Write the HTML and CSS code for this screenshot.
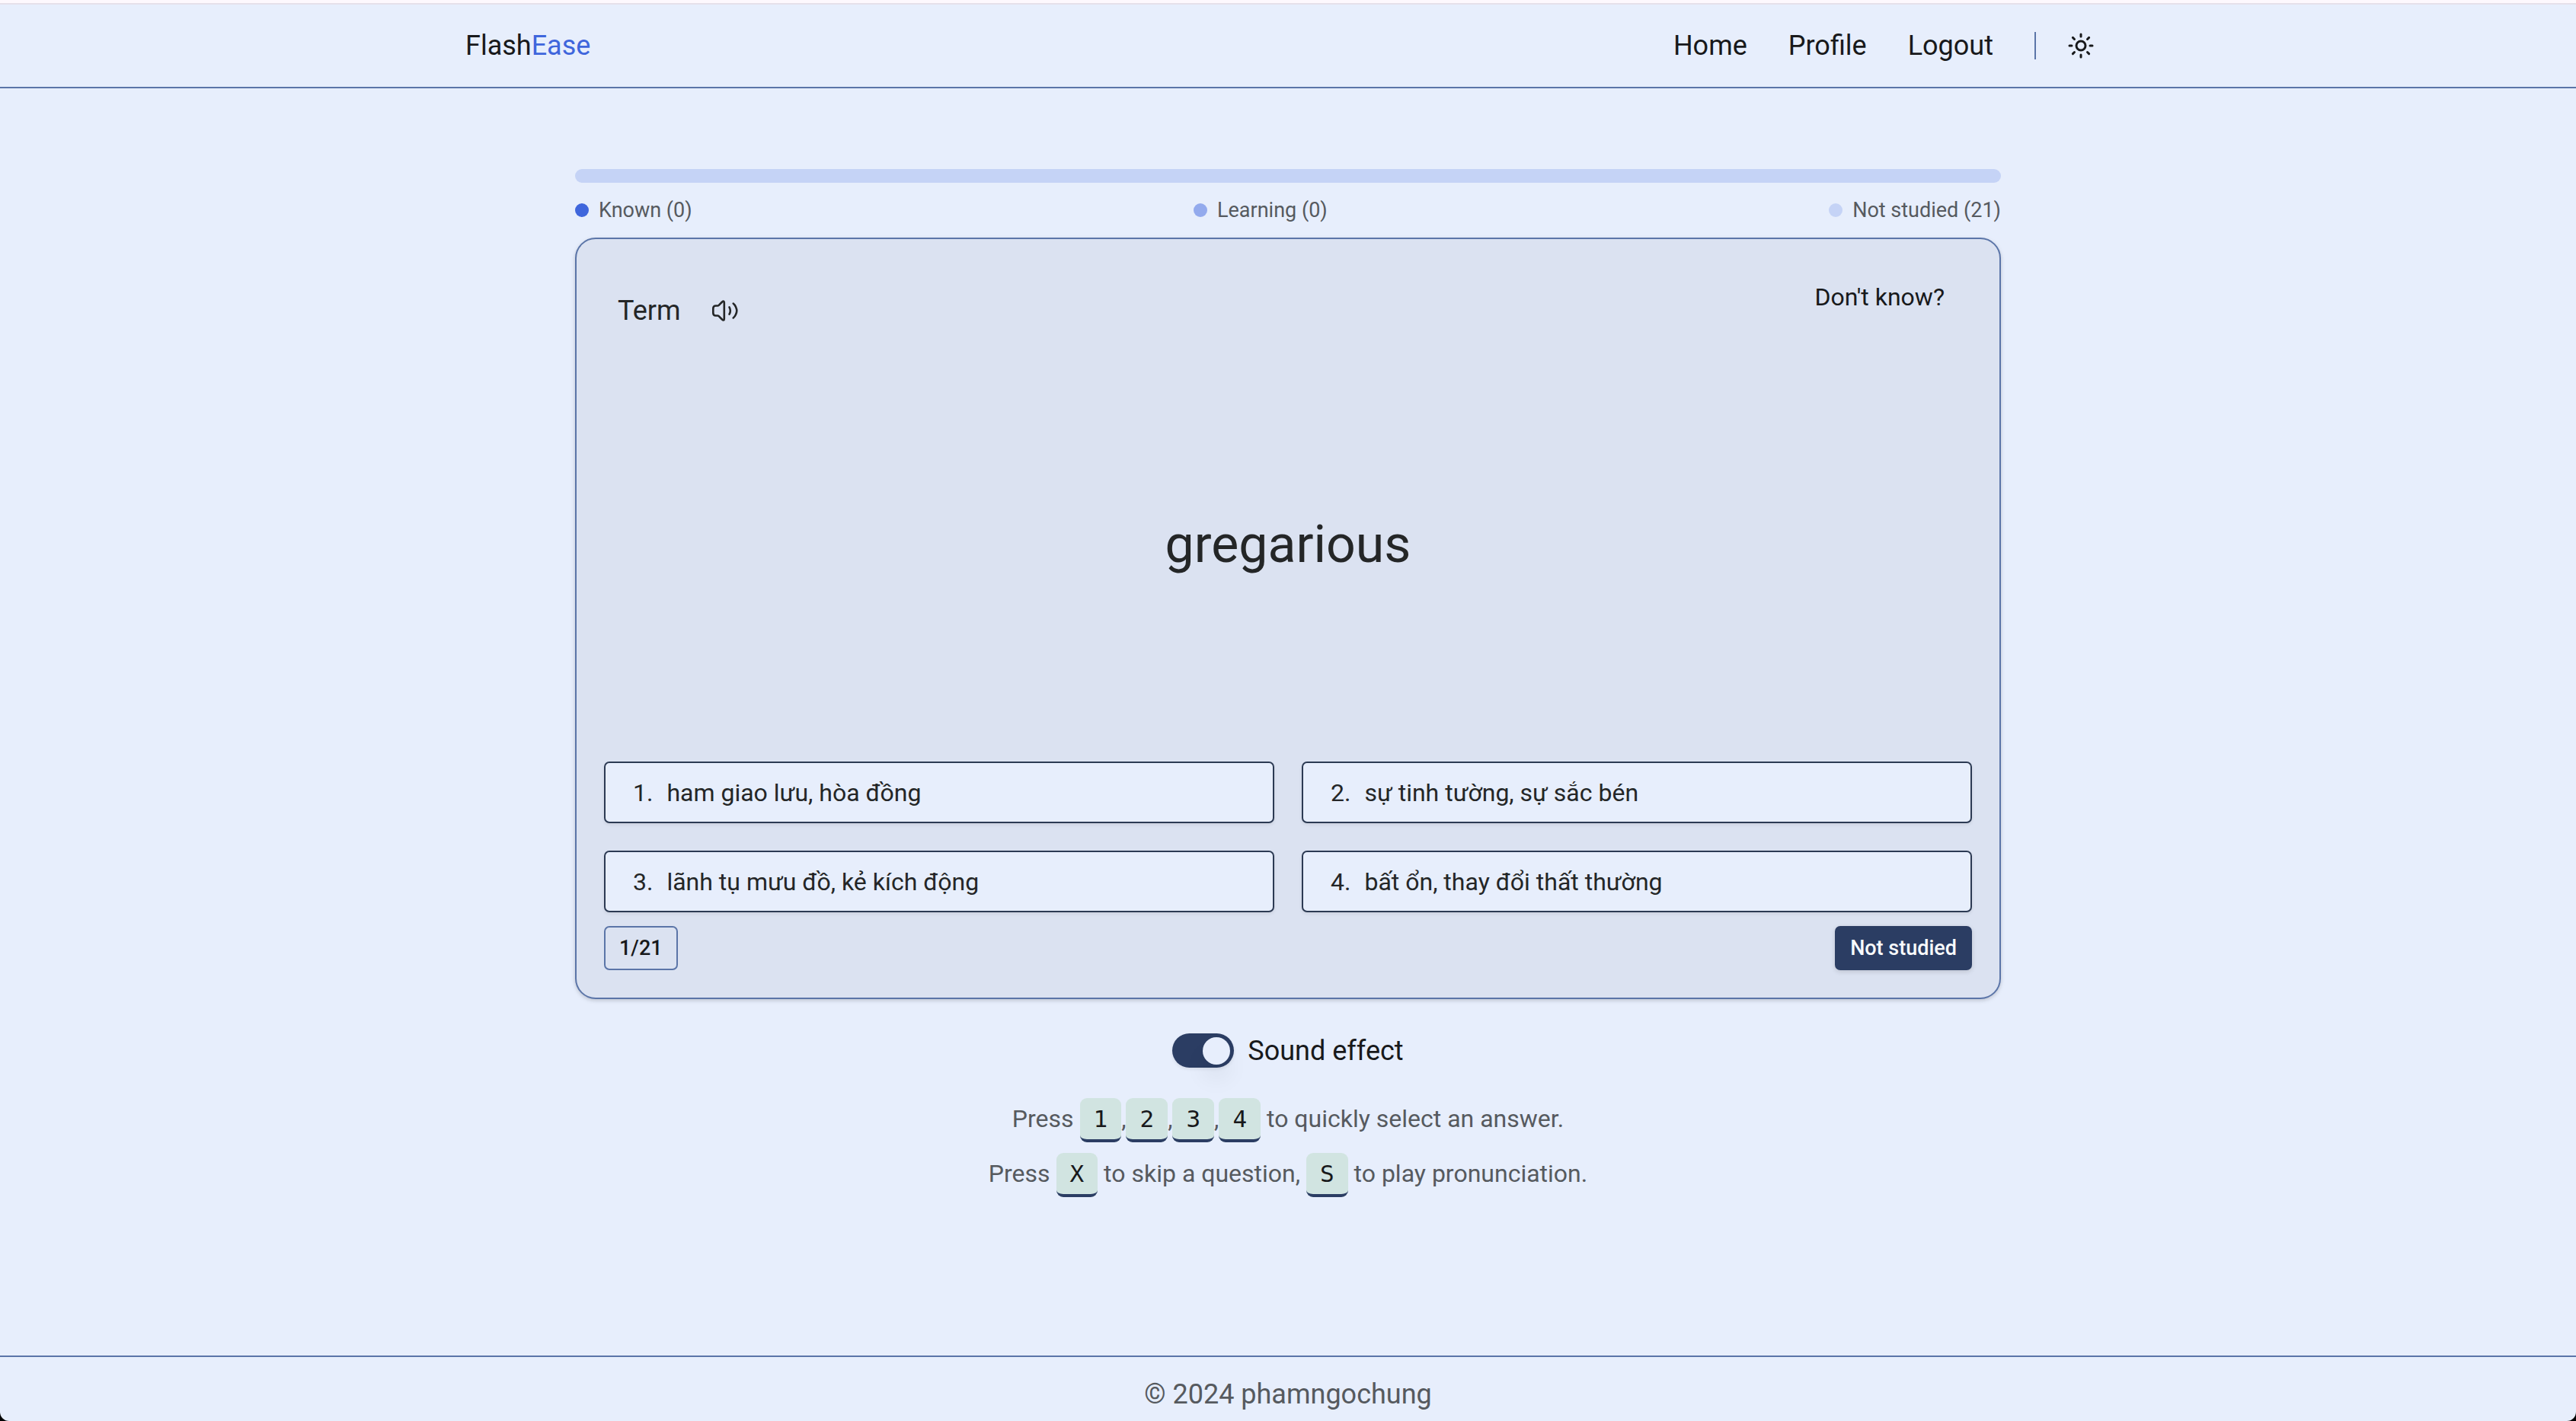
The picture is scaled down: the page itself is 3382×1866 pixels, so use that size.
FILE: index.html
```html
<!DOCTYPE html>
<html lang="en">
<head>
<meta charset="utf-8">
<meta name="viewport" content="width=device-width, initial-scale=1">
<title>FlashEase</title>
<link rel="stylesheet" href="styles.css">
</head>
<body>
<header class="site-header">
  <div class="header-inner">
    <a class="logo" href="#">Flash<span class="logo-accent">Ease</span></a>
    <nav class="nav">
      <a href="#">Home</a>
      <a href="#">Profile</a>
      <a href="#">Logout</a>
      <span class="nav-divider"></span>
      <button class="icon-button theme-button" type="button" aria-label="Toggle theme">
        <svg class="icon" viewBox="0 0 24 24" fill="none" stroke="currentColor" stroke-width="2" stroke-linecap="round" stroke-linejoin="round"><circle cx="12" cy="12" r="4"/><path d="M12 2v2M12 20v2M4.93 4.93l1.41 1.41M17.66 17.66l1.41 1.41M2 12h2M20 12h2M6.34 17.66l-1.41 1.41M19.07 4.93l-1.41 1.41"/></svg>
      </button>
    </nav>
  </div>
</header>

<main class="main">
  <div class="progress" role="progressbar" aria-label="Study progress" aria-valuemin="0" aria-valuemax="21" aria-valuenow="0"></div>
  <ul class="legend">
    <li><span class="dot dot-known"></span>Known (0)</li>
    <li><span class="dot dot-learning"></span>Learning (0)</li>
    <li><span class="dot dot-new"></span>Not studied (21)</li>
  </ul>

  <section class="card">
    <div class="card-head">
      <div class="term-label">
        <span>Term</span>
        <button class="icon-button sound-button" type="button" aria-label="Play pronunciation">
          <svg class="icon" viewBox="0 0 36 36" fill="none" stroke="currentColor" stroke-width="2.6" stroke-linecap="round" stroke-linejoin="round"><path d="M2.3 15v6q0 3.500 3.500 3.500h2.200q1 0 1.700.7l4.300 4.300q2.800 2.200 2.800-1v-21q0-3.200-2.800-1l-4.300 4.300q-.7.7-1.700.7H5.800q-3.500 0-3.500 3.500z"/><path d="M23.500 13.300q2.700 4.700 0 9.400M28.700 8.500q2 1.500 3.300 4.500t1.300 5q0 2-1.300 5t-3.300 4.500"/></svg>
        </button>
      </div>
      <button class="skip-button" type="button">Don't know?</button>
    </div>
    <h1 class="term">gregarious</h1>
    <div class="answers">
      <button class="answer" type="button"><span>1.</span><span>ham giao lưu, hòa đồng</span></button>
      <button class="answer" type="button"><span>2.</span><span>sự tinh tường, sự sắc bén</span></button>
      <button class="answer" type="button"><span>3.</span><span>lãnh tụ mưu đồ, kẻ kích động</span></button>
      <button class="answer" type="button"><span>4.</span><span>bất ổn, thay đổi thất thường</span></button>
    </div>
    <div class="card-foot">
      <span class="badge">1/21</span>
      <span class="badge badge-solid">Not studied</span>
    </div>
  </section>

  <div class="sound-toggle">
    <input class="switch" type="checkbox" role="switch" id="sound-effect" checked>
    <label for="sound-effect">Sound effect</label>
  </div>
  <div class="hints">
    <p>Press <kbd>1</kbd>,<kbd>2</kbd>,<kbd>3</kbd>,<kbd>4</kbd> to quickly select an answer.</p>
    <p>Press <kbd>X</kbd> to skip a question, <kbd>S</kbd> to play pronunciation.</p>
  </div>
</main>

<footer class="site-footer">© 2024 phamngochung</footer>
</body>
</html>
```
FILE: styles.css
```css
:root {
  --bg: #e7eefc;
  --card: #dbe2f1;
  --text: #18191b;
  --text-soft: #242627;
  --muted: #565a5f;
  --border: #5b75a8;
  --navy: #2b3d63;
  --blue: #3f66dc;
}

*, *::before, *::after {
  box-sizing: border-box;
}

html {
  background: #000;
}

body {
  margin: 0;
  min-height: 100vh;
  display: flex;
  flex-direction: column;
  border-top: 4px solid #fdf8fd;
  border-radius: 0 0 12px 12px;
  background: var(--bg);
  color: var(--text);
  font: 400 36px/54px Roboto, "Liberation Sans", sans-serif;
}

a {
  color: inherit;
  text-decoration: none;
}

button {
  margin: 0;
  border: 0;
  padding: 0;
  background: none;
  color: inherit;
  font: inherit;
  cursor: pointer;
}

.icon {
  display: block;
  width: 36px;
  height: 36px;
}

.icon-button {
  display: flex;
  align-items: center;
  justify-content: center;
}

/* Header */
.site-header {
  border-top: 2px solid #e6e0ea;
  border-bottom: 2px solid var(--border);
}

.header-inner {
  display: flex;
  align-items: center;
  justify-content: space-between;
  max-width: 2304px;
  margin: 0 auto;
  padding: 27px 72px;
}

.logo-accent {
  color: var(--blue);
}

.nav {
  display: flex;
  align-items: center;
  gap: 54px;
}

.nav-divider {
  width: 2px;
  height: 36px;
  background: var(--border);
}

.theme-button {
  width: 78px;
  margin-left: -34px;
}

/* Study area */
.main {
  flex: 1;
  width: 100%;
  max-width: 1872px;
  margin: 0 auto;
  padding: 106px 0 36px;
}

.progress {
  height: 18px;
  border-radius: 9px;
  background: #c5d3f6;
}

.legend {
  display: flex;
  justify-content: space-between;
  margin: 18px 0;
  padding: 0;
  list-style: none;
  color: var(--muted);
  font-size: 27px;
  line-height: 36px;
}

.legend li {
  display: flex;
  align-items: center;
  gap: 13px;
}

.dot {
  width: 18px;
  height: 18px;
  border-radius: 50%;
}

.dot-known {
  background: var(--blue);
}

.dot-learning {
  background: #93aaed;
}

.dot-new {
  background: #c5d3f6;
}

.card {
  display: flex;
  flex-direction: column;
  padding: 36px;
  border: 2px solid var(--border);
  border-radius: 27px;
  background: var(--card);
  box-shadow: 0 2px 6px rgb(0 0 0 / 10%), 0 2px 4px rgb(0 0 0 / 8%);
}

.card-head {
  display: flex;
  align-items: flex-start;
  justify-content: space-between;
}

.term-label {
  display: flex;
  align-items: center;
  gap: 18px;
  padding: 18px 18px 0;
  color: var(--text-soft);
}

.sound-button {
  width: 81px;
  height: 80px;
}

.skip-button {
  height: 80px;
  padding: 0 36px;
  font-size: 32px;
}

.term {
  display: flex;
  align-items: center;
  justify-content: center;
  min-height: 534px;
  margin: 0 0 18px;
  color: var(--text-soft);
  font-size: 68px;
  font-weight: 400;
  line-height: 72px;
}

.answers {
  display: grid;
  grid-template-columns: 1fr 1fr;
  gap: 36px;
}

.answer {
  display: flex;
  align-items: center;
  gap: 18px;
  min-height: 81px;
  padding: 0 36px;
  border: 2px solid #2c3a53;
  border-radius: 7px;
  background: var(--bg);
  box-shadow: 0 2px 4px rgb(0 0 0 / 8%);
  color: var(--text-soft);
  font-size: 32px;
  text-align: left;
}

.card-foot {
  display: flex;
  justify-content: space-between;
  margin-top: 18px;
}

.badge {
  padding: 9px 18px;
  border: 2px solid var(--border);
  border-radius: 7px;
  font-size: 27px;
  font-weight: 500;
  line-height: 36px;
}

.badge-solid {
  border-color: var(--navy);
  background: var(--navy);
  box-shadow: 0 2px 6px rgb(0 0 0 / 14%);
  color: #f8fafc;
}

/* Settings and keyboard hints */
.sound-toggle {
  display: flex;
  align-items: center;
  justify-content: center;
  gap: 18px;
  height: 45px;
  margin-top: 45px;
}

.switch {
  appearance: none;
  display: flex;
  align-items: center;
  width: 81px;
  height: 45px;
  margin: 0;
  padding: 0 5px;
  border-radius: 23px;
  background: #c5d3f6;
  box-shadow: 0 2px 4px rgb(0 0 0 / 8%);
  cursor: pointer;
}

.switch::before {
  content: "";
  width: 36px;
  height: 36px;
  border-radius: 50%;
  background: var(--bg);
  box-shadow: 0 20px 30px rgb(0 0 0 / 6%);
}

.switch:checked {
  justify-content: flex-end;
  background: var(--navy);
}

.hints {
  margin-top: 31px;
  color: var(--muted);
  font-size: 32px;
  line-height: 72px;
  text-align: center;
}

.hints p {
  margin: 0;
}

kbd {
  padding: 9px 18px;
  border-bottom: 4px solid var(--navy);
  border-radius: 9px;
  background: #d1e4e1;
  color: var(--text);
  font-family: "DejaVu Sans Mono", monospace;
  font-size: 31px;
  line-height: 36px;
}

/* Footer */
.site-footer {
  padding: 22px 36px 8px;
  border-top: 2px solid var(--border);
  color: var(--muted);
  text-align: center;
}
```
